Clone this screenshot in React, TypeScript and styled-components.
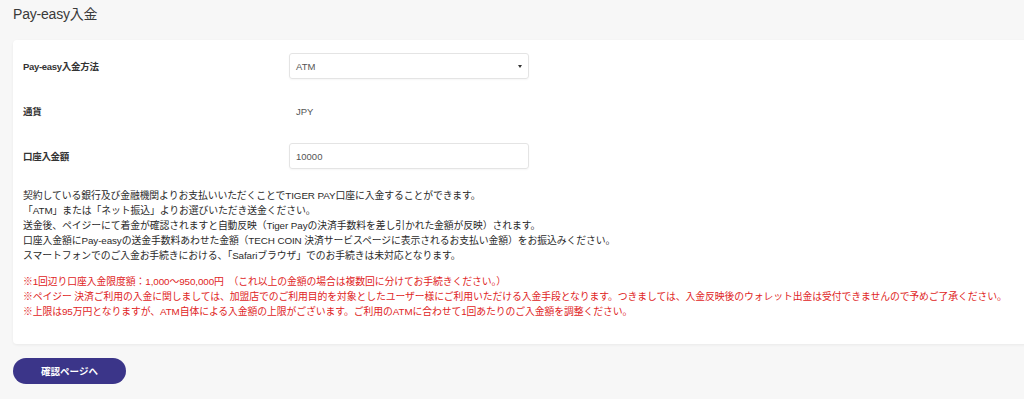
import React from "react";
import styled, { createGlobalStyle } from "styled-components";

const Global = createGlobalStyle`
  html, body { margin: 0; padding: 0; background: #f7f7f7; overflow: hidden; }
  body { font-family: "Liberation Sans", "Noto Sans CJK JP", sans-serif; color: #333; }
`;

const Page = styled.div`
  padding: 4px 0 0 13px;
`;

const Title = styled.h2`
  margin: 0;
  font-size: 14px;
  font-weight: 400;
  color: #3a3a3a;
  line-height: 20px;
  letter-spacing: -0.2px;
`;

const Card = styled.div`
  margin-top: 16px;
  width: calc(100% + 20px);
  box-sizing: border-box;
  background: #fff;
  border-radius: 4px;
  box-shadow: 0 1px 3px rgba(0, 0, 0, 0.06);
  padding: 13px 10px 25px 10px;
`;

const Row = styled.div`
  display: grid;
  grid-template-columns: 266px 240px;
  align-items: center;
  height: 26px;
  margin-bottom: 19px;
`;

const Label = styled.div`
  font-size: 9.5px;
  font-weight: 700;
  color: #333;
  letter-spacing: -0.3px;
`;

const Field = styled.div`
  height: 26px;
  box-sizing: border-box;
  border: 1px solid #e4e4e4;
  border-radius: 3px;
  box-shadow: 0 1px 2px rgba(0, 0, 0, 0.04);
  display: flex;
  align-items: center;
  justify-content: space-between;
  padding: 0 6px;
  font-size: 9.5px;
  color: #555;
`;

const Caret = styled.span`
  width: 0;
  height: 0;
  border-left: 2.5px solid transparent;
  border-right: 2.5px solid transparent;
  border-top: 3px solid #333;
`;

const Value = styled.div`
  padding-left: 7px;
  font-size: 9.5px;
  color: #555;
`;

const Notes = styled.div`
  margin-top: 13px;
  font-size: 9.85px;
  line-height: 15px;
  color: #2a2a2a;
  letter-spacing: -0.1px;
`;

const Warn = styled.div`
  margin-top: 11px;
  font-size: 9.85px;
  line-height: 15px;
  color: #e02424;
  letter-spacing: -0.1px;
`;

const Button = styled.button`
  margin-top: 14px;
  width: 113px;
  height: 26px;
  border: none;
  border-radius: 13px;
  background: #3b3589;
  color: #fff;
  font-family: inherit;
  font-size: 9.5px;
  font-weight: 700;
  cursor: pointer;
`;

export default function App() {
  return (
    <>
      <Global />
      <Page>
        <Title>Pay-easy入金</Title>
        <Card>
          <Row>
            <Label>Pay-easy入金方法</Label>
            <Field>
              <span>ATM</span>
              <Caret />
            </Field>
          </Row>
          <Row>
            <Label>通貨</Label>
            <Value>JPY</Value>
          </Row>
          <Row>
            <Label>口座入金額</Label>
            <Field>
              <span>10000</span>
            </Field>
          </Row>
          <Notes>
            契約している銀行及び金融機関よりお支払いいただくことでTIGER PAY口座に入金することができます。
            <br />「ATM」または「ネット振込」よりお選びいただき送金ください。
            <br />送金後、ペイジーにて着金が確認されますと自動反映（Tiger Payの決済手数料を差し引かれた金額が反映）されます。
            <br />口座入金額にPay-easyの送金手数料あわせた金額（TECH COIN 決済サービスページに表示されるお支払い金額）をお振込みください。
            <br />スマートフォンでのご入金お手続きにおける、「Safariブラウザ」でのお手続きは未対応となります。
          </Notes>
          <Warn>
            ※1回辺り口座入金限度額：1,000～950,000円　（これ以上の金額の場合は複数回に分けてお手続きください。）
            <br />※ペイジー 決済ご利用の入金に関しましては、加盟店でのご利用目的を対象としたユーザー様にご利用いただける入金手段となります。つきましては、入金反映後のウォレット出金は受付できませんので予めご了承ください。
            <br />※上限は95万円となりますが、ATM自体による入金額の上限がございます。ご利用のATMに合わせて1回あたりのご入金額を調整ください。
          </Warn>
        </Card>
        <Button>確認ページへ</Button>
      </Page>
    </>
  );
}
